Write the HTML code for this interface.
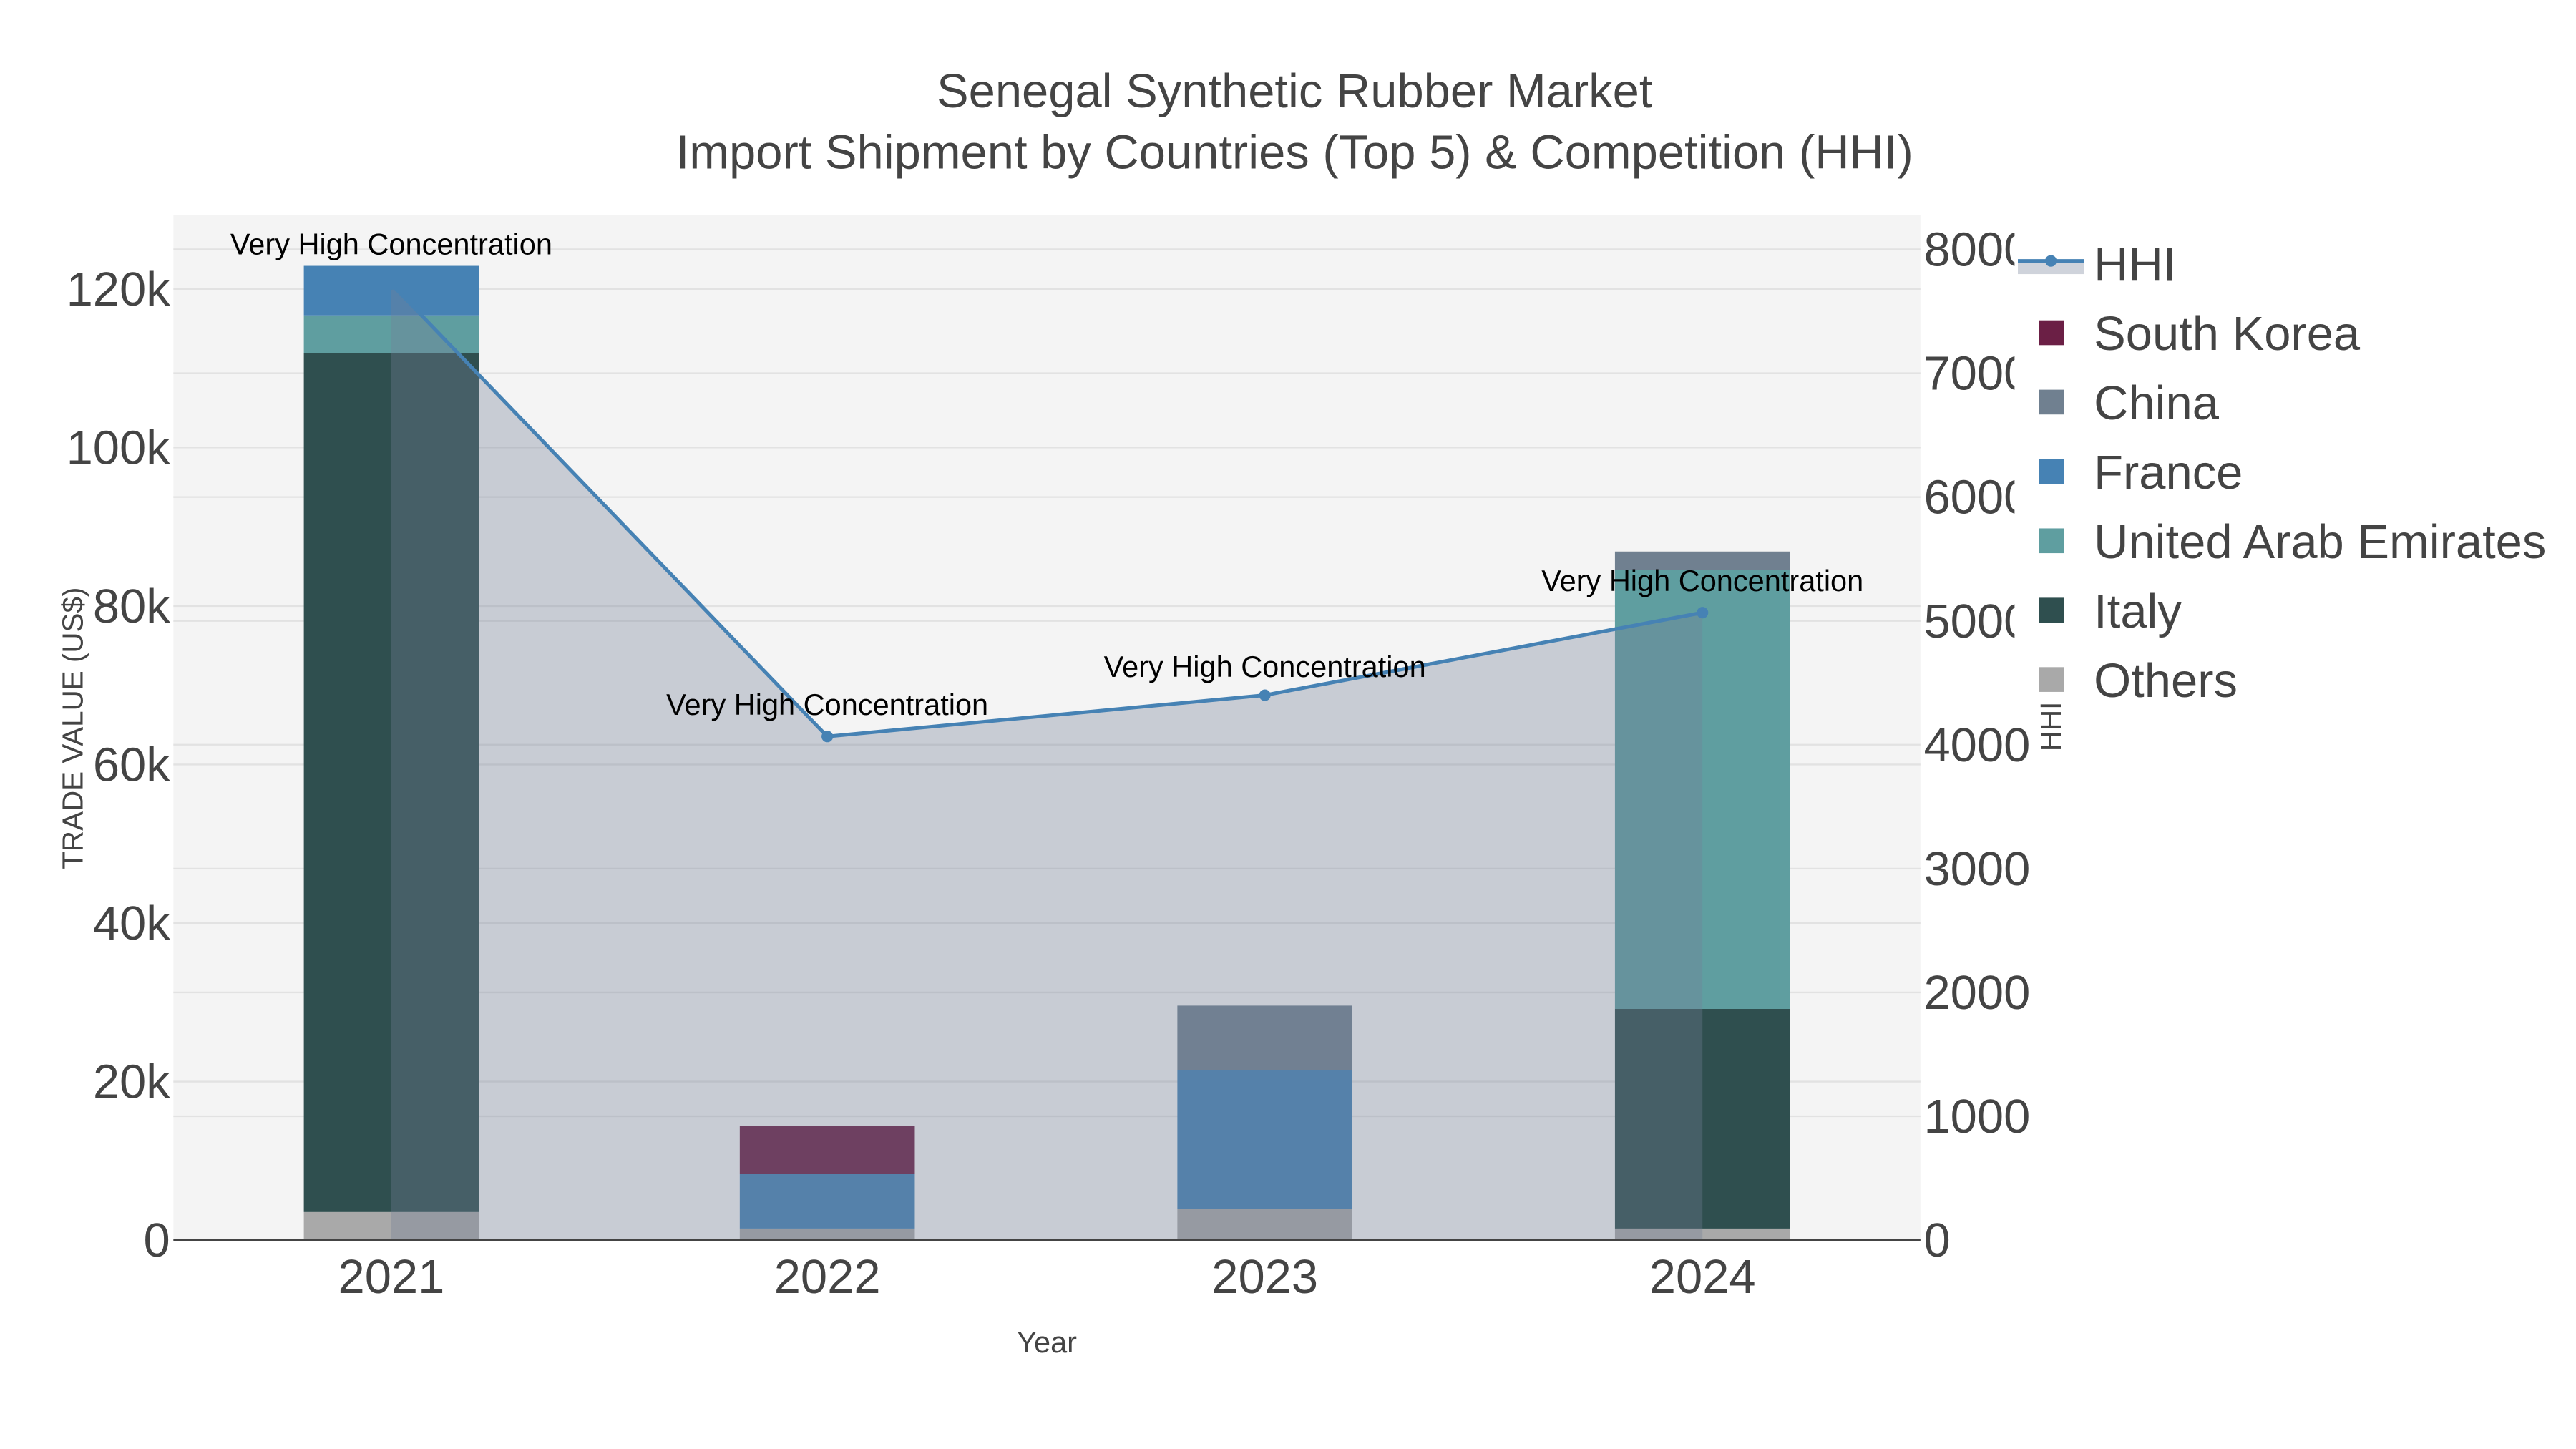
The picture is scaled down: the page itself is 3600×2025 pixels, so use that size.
<!DOCTYPE html>
<html><head><meta charset="utf-8"><style>html,body{margin:0;padding:0;background:#fff}svg{display:block}</style></head>
<body>
<svg width="3600" height="2025" viewBox="0 0 1560 877.5" xmlns="http://www.w3.org/2000/svg" font-family="'Liberation Sans', sans-serif">
<rect x="0" y="0" width="1560" height="877.5" fill="#fff"/>
<rect x="105" y="130" width="1058" height="621" fill="#f4f4f4"/>
<g stroke="#e2e2e2" stroke-width="1">
<line x1="105" x2="1163" y1="655" y2="655"/><line x1="105" x2="1163" y1="559" y2="559"/><line x1="105" x2="1163" y1="463" y2="463"/><line x1="105" x2="1163" y1="367" y2="367"/><line x1="105" x2="1163" y1="271" y2="271"/><line x1="105" x2="1163" y1="175" y2="175"/>
<line x1="105" x2="1163" y1="676" y2="676"/><line x1="105" x2="1163" y1="601" y2="601"/><line x1="105" x2="1163" y1="526" y2="526"/><line x1="105" x2="1163" y1="451" y2="451"/><line x1="105" x2="1163" y1="376" y2="376"/><line x1="105" x2="1163" y1="301" y2="301"/><line x1="105" x2="1163" y1="226" y2="226"/><line x1="105" x2="1163" y1="151" y2="151"/>
</g>
<rect x="184" y="734" width="106" height="17" fill="#a9a9a9"/>
<rect x="184" y="214" width="106" height="520" fill="#2f4f4f"/>
<rect x="184" y="191" width="106" height="23" fill="#5f9ea0"/>
<rect x="184" y="161" width="106" height="30" fill="#4682b4"/>
<rect x="448" y="744" width="106" height="7" fill="#a9a9a9"/>
<rect x="448" y="711" width="106" height="33" fill="#4682b4"/>
<rect x="448" y="682" width="106" height="29" fill="#6b1f45"/>
<rect x="713" y="732" width="106" height="19" fill="#a9a9a9"/>
<rect x="713" y="648" width="106" height="84" fill="#4682b4"/>
<rect x="713" y="609" width="106" height="39" fill="#708090"/>
<rect x="978" y="744" width="106" height="7" fill="#a9a9a9"/>
<rect x="978" y="611" width="106" height="133" fill="#2f4f4f"/>
<rect x="978" y="345" width="106" height="266" fill="#5f9ea0"/>
<rect x="978" y="334" width="106" height="11" fill="#708090"/>
<polygon points="237,751 237,172 501,446 766,421 1031,371 1031,751" fill="rgb(116,128,151)" fill-opacity="0.345"/>
<polyline points="237,172 501,446 766,421 1031,371" fill="none" stroke="#4682b4" stroke-width="2.2"/>
<g fill="#4682b4"><circle cx="237" cy="172" r="3.5"/><circle cx="501" cy="446" r="3.5"/><circle cx="766" cy="421" r="3.5"/><circle cx="1031" cy="371" r="3.5"/></g>
<line x1="105" x2="1163" y1="751" y2="751" stroke="#444" stroke-width="1"/>
<g font-size="18" fill="#000" text-anchor="middle">
<text x="237" y="154">Very High Concentration</text>
<text x="501" y="433">Very High Concentration</text>
<text x="766" y="410">Very High Concentration</text>
<text x="1031" y="358">Very High Concentration</text>
</g>
<g font-size="29" fill="#444" text-anchor="end">
<text x="103" y="761">0</text><text x="103" y="665">20k</text><text x="103" y="569">40k</text><text x="103" y="473">60k</text><text x="103" y="377">80k</text><text x="103" y="281">100k</text><text x="103" y="185">120k</text>
</g>
<g font-size="29" fill="#444" text-anchor="middle">
<text x="237" y="783">2021</text><text x="501" y="783">2022</text><text x="766" y="783">2023</text><text x="1031" y="783">2024</text>
</g>
<g font-size="29" fill="#444">
<text x="1165" y="761">0</text><text x="1165" y="686">1000</text><text x="1165" y="611">2000</text><text x="1165" y="536">3000</text><text x="1165" y="461">4000</text><text x="1165" y="386">5000</text><text x="1165" y="311">6000</text><text x="1165" y="236">7000</text><text x="1165" y="161">8000</text>
</g>
<text x="634" y="819" font-size="18" fill="#444" text-anchor="middle">Year</text>
<text transform="translate(50,441) rotate(-90)" font-size="17.5" fill="#444" text-anchor="middle">TRADE VALUE (US$)</text>
<g font-size="29" fill="#444" text-anchor="middle">
<text x="784" y="65">Senegal Synthetic Rubber Market</text>
<text x="784" y="102">Import Shipment by Countries (Top 5) &amp; Competition (HHI)</text>
</g>
<rect x="1220" y="135" width="340" height="300" fill="#fff"/>
<text transform="translate(1248,440) rotate(-90)" font-size="17.5" fill="#444" text-anchor="middle">HHI</text>
<rect x="1222" y="158" width="40" height="8" fill="rgb(116,128,151)" fill-opacity="0.345"/>
<line x1="1222" x2="1262" y1="158" y2="158" stroke="#4682b4" stroke-width="2.2"/>
<circle cx="1242" cy="158" r="3.5" fill="#4682b4"/>
<rect x="1235" y="194" width="15" height="15" fill="#6b1f45"/>
<rect x="1235" y="236" width="15" height="15" fill="#708090"/>
<rect x="1235" y="278" width="15" height="15" fill="#4682b4"/>
<rect x="1235" y="320" width="15" height="15" fill="#5f9ea0"/>
<rect x="1235" y="362" width="15" height="15" fill="#2f4f4f"/>
<rect x="1235" y="404" width="15" height="15" fill="#a9a9a9"/>
<g font-size="29" fill="#444">
<text x="1268" y="170">HHI</text><text x="1268" y="212">South Korea</text><text x="1268" y="254">China</text><text x="1268" y="296">France</text><text x="1268" y="338">United Arab Emirates</text><text x="1268" y="380">Italy</text><text x="1268" y="422">Others</text>
</g>
</svg>
</body></html>
